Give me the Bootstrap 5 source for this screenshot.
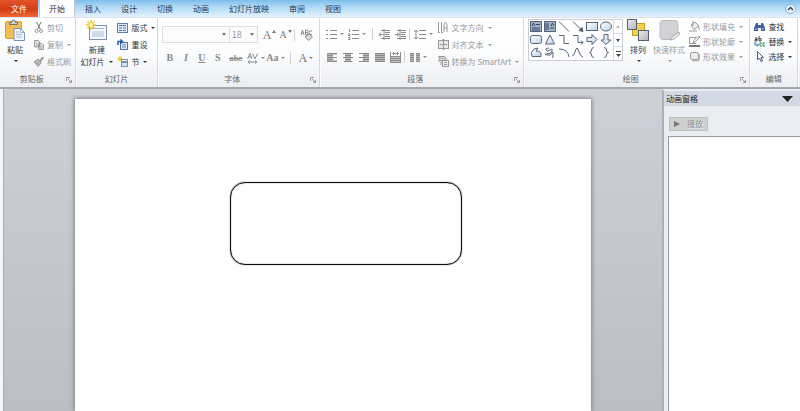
<!DOCTYPE html>
<html lang="zh-CN">
<head>
<meta charset="utf-8">
<meta name="viewport" content="width=device-width, initial-scale=1">
<title>演示文稿</title>
<link href="https://cdn.jsdelivr.net/npm/bootstrap@5.3.0/dist/css/bootstrap.min.css" rel="stylesheet">
<style>
body{font-family:"Noto Sans CJK SC","Liberation Sans",sans-serif;font-size:8px;line-height:12px;color:#333;background:#cdd1d7}
button,select{font:inherit;color:inherit;background:none;border:0;padding:0;line-height:12px}
svg{display:block;flex:none;fill:none;stroke:currentColor}
.tabbar{height:17px;background:linear-gradient(#7dbdec,#a9d6f5 35%,#e4f2fc)}
.tabbar .rtab{padding:0 10px;color:#26384d;height:17px;line-height:12px}
.tabbar .file-tab{background:linear-gradient(#e4552c,#d33d16 55%,#ee6a34);color:#fff;padding:0 11px;margin-right:1px}
.tabbar .rtab.active{background:#fff;color:#333;border:1px solid #b9c6d6;border-width:0 1px;padding:0 9px}
.ribbon{height:70px;background:linear-gradient(#fff,#fbfcfd 50%,#eceef3);border-top:1px solid #dde3ea}
.rgroup{border-right:1px solid #d3d7de;box-shadow:1px 0 #fff;min-width:0;display:flex;flex-direction:column}
.gbody{height:54px;padding-top:1px}
.gcap{color:#666;text-align:center;position:relative;line-height:14px}
.gcap.with-launch{padding-right:12px}
.gcap svg{position:absolute;right:3px;top:5px;color:#999}
.g-clip{flex:76 1 0}.g-slide{flex:81 1 0}.g-font{flex:162 1 0}.g-para{flex:205 1 0}.g-draw{flex:227 1 0}.g-edit{flex:47 1 0}
.ribbon-end{flex:2 1 0}
.off{color:#9a9a9a}
.cmd{display:flex;align-items:center;gap:3px;white-space:nowrap;height:17px}
.tight .cmd{height:15px}
.car::after{content:"";border:2px solid transparent;border-top-color:currentColor;border-bottom:0;margin-left:1px;flex:none}
.big{display:flex;flex-direction:column;align-items:center;white-space:nowrap}
.big svg{margin-bottom:3px}
.big .under{display:flex;padding-top:4px}
.trow{display:flex;align-items:center;margin-top:7px}
.tool{width:16px;height:16px;display:inline-flex;align-items:center;justify-content:center;gap:2px;font-family:"Liberation Serif",serif;font-size:10px;font-weight:bold;color:#8b8b8b;flex:none}
.tool.w20{width:20px}.tool.w22{width:22px}
.tool.grow{font-size:12px;font-weight:normal;-webkit-text-stroke:0;color:#777;gap:1px}
.tool.shrink{font-size:10px;font-weight:normal;color:#777;gap:1px}
.tool svg.tip{align-self:flex-start;margin-top:3px}
.rsep{width:1px;height:12px;background:#d0d0d0;flex:none}
.pick{appearance:none;border:1px solid #dedede;height:17px;padding:0 4px;color:#999;font-size:9px;background:#fbfbfb url("data:image/svg+xml,%3Csvg xmlns='http://www.w3.org/2000/svg' width='4' height='3'%3E%3Cpath d='M0 0h4l-2 3z' fill='%23777'/%3E%3C/svg%3E") no-repeat right 3px center}
.pick-name{width:71px}.pick-size{width:30px;margin-left:-1px;padding:0 2px}
.gallery{border:1px solid #c9ced6;background:#fff;height:42px;color:#566476}
.shapes{display:grid;grid-template-columns:repeat(6,14px);grid-auto-rows:13px;align-items:center;justify-items:center}
.scroller{width:9px;border-left:1px solid #d5d8de}
.scroller button{flex:1;display:flex;align-items:center;justify-content:center;border-bottom:1px solid #d5d8de}
.scroller button:last-child{border:0}
.work{border-top:2px solid #a5a7af;min-height:0}
.thumbs{width:4px;background:#f4f6f9;border-right:1px solid #a9adb6}
.stage{background:linear-gradient(#cdd1d7,#bbbec4);padding:10px 71px 0;overflow:hidden}
.slide{background:#fff;height:100%;padding-top:83px;box-shadow:0 0 4px 1px #7f8387}
.roundbox{width:45%;height:83px;margin-left:30%;border:1px solid #111;border-radius:15px;box-shadow:0 0 1px #000,inset 0 0 1px #000}
.pane{width:138px;background:#e9edf2;border-left:2px solid #a9afbb;border-top:2px solid #e9edf2}
.pane-head{height:15px;background:#d3d9e3;padding:0 7px 0 2px;color:#222}
.play{background:#cfcfcf;border:1px solid #bdbfc1;height:14px;width:39px;color:#929292;margin:11px 0 5px 5px;text-shadow:1px 1px #eee}
.anim-list{background:#fff;border:1px solid #969ba5;border-right:0;border-bottom:0;margin-left:4px}
</style>
<script src="https://cdn.jsdelivr.net/npm/bootstrap@5.3.0/dist/js/bootstrap.bundle.min.js"></script>
</head>
<body class="vh-100 d-flex flex-column overflow-hidden">
<svg width="0" height="0" class="position-absolute" aria-hidden="true">
<defs>
<symbol id="launch" viewBox="0 0 6 6"><path d="M.5 4V.5H4M2 2l3 3M5.500 3v2.500H3"/></symbol>
<linearGradient id="soft" x2="1" y2="1"><stop stop-color="#fff"/><stop offset="1" stop-color="#bcd5ec"/></linearGradient>
<linearGradient id="grey" x2="1" y2="1"><stop stop-color="#eee"/><stop offset="1" stop-color="#b0b0b8"/></linearGradient>
</defs>
</svg>

<nav class="tabbar d-flex" aria-label="功能区选项卡">
<button class="rtab file-tab">文件</button><button class="rtab active">开始</button><button class="rtab">插入</button><button class="rtab">设计</button><button class="rtab">切换</button><button class="rtab">动画</button><button class="rtab">幻灯片放映</button><button class="rtab">审阅</button><button class="rtab">视图</button>
<button class="ms-auto me-1" aria-label="折叠功能区"><svg width="11" height="10" viewBox="0 0 11 10"><ellipse cx="5.500" cy="5" rx="5" ry="4.500" fill="#e4f0fa" stroke="#8db4d8"/><path d="M3 6L5.500 3.500 8 6" stroke="#345" stroke-width="1.300"/></svg></button>
</nav>

<main class="ribbon d-flex">
<section class="rgroup g-clip">
<div class="gbody d-flex">
<button class="big px-1">
<svg width="22" height="22" viewBox="0 0 22 22"><rect x="1.500" y="2.500" width="16" height="17" rx="1" fill="#f3bd55" stroke="#d99a35"/><path d="M5.500 5.500V3.500H7.500Q7.500 1 9.500 1T11.500 3.500H13.500V5.500Z" fill="#ccc" stroke="#777"/><path d="M10 9.500H16.500L20.500 13.500V21.500H10Z" fill="#eef5fd" stroke="#7c93ae"/><path d="M16.500 9.500V13.500H20.500M12 13h3M12 15.500h6M12 18h6" stroke="#9eb5cc"/></svg>
<span>粘贴</span><span class="car under"></span></button>
<div class="off ms-1">
<button class="cmd"><svg width="10" height="11" viewBox="0 0 10 11"><path d="M2.500 0L6.500 7.500M7 0L3.500 7.500" stroke="#777"/><circle cx="2.500" cy="9" r="1.500"/><circle cx="7" cy="9" r="1.500"/></svg>剪切</button>
<button class="cmd car"><svg width="10" height="10" viewBox="0 0 10 10"><path d="M.5.5h4l1 1V7h-5zM4.500 3.500H8L9.500 5v4.500h-5z" fill="#e4e4e4"/><path d="M6 6h2M6 8h2M2 3h1M2 5h2"/></svg>复制</button>
<button class="cmd"><svg width="10" height="10" viewBox="0 0 10 10"><path d="M9.500 0L6 4" stroke-width="2"/><path d="M0 5L4 2 7.500 5.500 4 9.500Z" fill="#bbb"/><path d="M2 5l3 2.500"/></svg>格式刷</button>
</div></div>
<div class="gcap with-launch">剪贴板<svg width="6" height="6"><use href="#launch"/></svg></div>
</section>

<section class="rgroup g-slide">
<div class="gbody d-flex">
<button class="big px-1">
<svg width="22" height="22" viewBox="0 0 22 22"><rect x="3.500" y="6.500" width="17" height="14" fill="#f5f9fe" stroke="#7d92b0"/><path d="M6 9.500h12" stroke="#9eb4d0"/><rect x="6" y="12" width="12" height="6" fill="#cbdcf0" stroke="none"/><path d="M5 1V11M0 6H10M1.500 2.500L8.500 9.500M8.500 2.500L1.500 9.500" stroke="#f0c32a" stroke-width="1.500"/><circle cx="5" cy="6" r="2" fill="#fff6b0" stroke="none"/></svg>
<span>新建</span><span class="d-flex align-items-center gap-1 car">幻灯片</span></button>
<div>
<button class="cmd car"><svg width="11" height="10" viewBox="0 0 11 10"><rect x=".5" y=".5" width="10" height="9" fill="#dceafa" stroke="#5f80ac"/><path d="M2 2.500h7M2 5h3M6 5h3M2 7.500h3M6 7.500h3" stroke="#5279ae"/></svg>版式</button>
<button class="cmd"><svg width="11" height="11" viewBox="0 0 11 11"><rect x="3.500" y="3.500" width="7" height="7" fill="#dceafa" stroke="#4f73a5"/><path d="M5 6h4M5 8h4" stroke="#6888b5"/><path d="M1 6V2.500H5M3.500 0.500L5.500 2.500 3.500 4.500" stroke="#2458a6" stroke-width="1.500"/></svg>重设</button>
<button class="cmd car"><svg width="11" height="11" viewBox="0 0 11 11"><path d="M3 0v6M0 3h6M1 1l4 4M5 1L1 5" stroke="#edc02d"/><rect x="4.500" y="3.500" width="6" height="2" fill="#fff" stroke="#7890b0"/><rect x="4.500" y="6.500" width="6" height="4" fill="#d8e6f6" stroke="#7890b0"/></svg>节</button>
</div></div>
<div class="gcap">幻灯片</div>
</section>

<section class="rgroup g-font">
<div class="gbody px-1">
<div class="trow">
<select class="pick pick-name" aria-label="字体"><option></option></select>
<select class="pick pick-size" aria-label="字号"><option>18</option></select>
<button class="tool grow ms-1" aria-label="增大字号">A<svg class="tip" width="4" height="3" viewBox="0 0 4 3"><path d="M0 3h4L2 0z" fill="#777" stroke="none"/></svg></button>
<button class="tool shrink" aria-label="减小字号">A<svg class="tip" width="4" height="3" viewBox="0 0 4 3"><path d="M0 0h4L2 3z" fill="#777" stroke="none"/></svg></button>
<span class="rsep"></span>
<button class="tool ms-1" aria-label="清除格式"><svg width="13" height="12" viewBox="0 0 13 12"><path d="M1 6L2.500 1 4 6M1.500 4h2M5.500 1v5h2q1-1 0-2.500h-2 2q1-1 0-2.500zM12 2q-3-1-3 1.500T12 5.500"/><path d="M5 8L9 5 12.500 8 8.500 11.500Z" fill="#ddd"/></svg></button>
</div>
<div class="trow">
<button class="tool">B</button><button class="tool fst-italic">I</button><button class="tool text-decoration-underline">U</button><button class="tool">S</button>
<button class="tool w20 text-decoration-line-through"><small>abe</small></button>
<button class="tool w20 car" aria-label="字符间距"><svg width="11" height="11" viewBox="0 0 11 11"><path d="M.5 6L3 .5 5 6M1.500 4h3M5.500.5L8 6 10.500.5M1 9h9M3 7.500L1 9l2 1.500M8 7.500L10 9 8 10.500"/></svg></button>
<button class="tool w20 car">Aa</button><span class="rsep ms-1"></span><button class="tool grow w22 car ms-1">A</button>
</div></div>
<div class="gcap with-launch">字体<svg width="6" height="6"><use href="#launch"/></svg></div>
</section>

<section class="rgroup g-para">
<div class="gbody d-flex px-1">
<div class="flex-shrink-0">
<div class="trow">
<button class="tool w22 car" aria-label="项目符号"><svg width="11" height="11" viewBox="0 0 11 11"><path d="M0 1.500h2M0 5.500h2M0 9.500h2M4 1.500h7M4 5.500h7M4 9.500h7"/></svg></button>
<button class="tool w22 car" aria-label="编号"><svg width="11" height="11" viewBox="0 0 11 11"><path d="M1.500 0v3M0 5h2v1.500H0M0 8.500h2v2H0M4 1.500h7M4 5.500h7M4 9.500h7"/></svg></button>
<span class="rsep mx-1"></span>
<button class="tool" aria-label="减少缩进"><svg width="11" height="11" viewBox="0 0 11 11"><path d="M2 1.500h9M6 3.500h5M6 5.500h4M6 7.500h5M2 9.500h9M0 5.500h4M2 3.500l-2 2 2 2M5 0v11"/></svg></button>
<button class="tool" aria-label="增加缩进"><svg width="11" height="11" viewBox="0 0 11 11"><path d="M2 1.500h9M6 3.500h5M6 5.500h4M6 7.500h5M2 9.500h9M0 5.500h4M2 3.500l2 2-2 2M5 0v11"/></svg></button>
<span class="rsep me-1"></span>
<button class="tool w20 car" aria-label="行距"><svg width="12" height="11" viewBox="0 0 12 11"><path d="M2 1v9M0 3l2-2 2 2M0 8l2 2 2-2M5 1.500h7M5 5.500h7M5 9.500h7"/></svg></button>
</div>
<div class="trow">
<button class="tool" aria-label="左对齐"><svg width="10" height="9" viewBox="0 0 10 9"><path d="M0 1h10M0 4.500h10M0 8h10" stroke-width="1"/><path d="M0 .5h6v8H0z" fill="#b5b5b5" stroke="none"/><path d="M0 .5h10M0 2.500h6M0 4.500h10M0 6.500h6M0 8.500h10"/></svg></button>
<button class="tool" aria-label="居中"><svg width="10" height="9" viewBox="0 0 10 9"><path d="M2 .5h6v8H2z" fill="#b5b5b5" stroke="none"/><path d="M0 .5h10M2 2.500h6M0 4.500h10M2 6.500h6M1 8.500h8"/></svg></button>
<button class="tool" aria-label="右对齐"><svg width="10" height="9" viewBox="0 0 10 9"><path d="M4 .5h6v8H4z" fill="#b5b5b5" stroke="none"/><path d="M0 .5h10M4 2.500h6M0 4.500h10M4 6.500h6M0 8.500h10"/></svg></button>
<button class="tool" aria-label="两端对齐"><svg width="10" height="9" viewBox="0 0 10 9"><path d="M0 .5h10v8H0z" fill="#b5b5b5" stroke="none"/><path d="M0 .5h10M0 2.500h10M0 4.500h10M0 6.500h10M0 8.500h10"/></svg></button>
<button class="tool" aria-label="分散对齐"><svg width="11" height="11" viewBox="0 0 11 11"><path d="M1 4h9v6H1z" fill="#c5c5c5" stroke="none"/><path d="M.5 0v11M10.500 0v11M3 1.500h5M1 4.500h9M1 6.500h9M1 8.500h9M1 10.500h9M4 0L2.500 1.500 4 3M7 0l1.500 1.500L7 3"/></svg></button>
<span class="rsep me-1"></span>
<button class="tool w20 car" aria-label="分栏"><svg width="10" height="9" viewBox="0 0 10 9"><path d="M0 0h4v9H0zM6 0h4v9H6z" fill="#b5b5b5" stroke="none"/><path d="M0 .5h4M0 2.500h4M0 4.500h4M0 6.500h4M0 8.500h4M6 .5h4M6 2.500h4M6 4.500h4M6 6.500h4M6 8.500h4"/></svg></button>
</div></div>
<div class="off ms-1">
<button class="cmd car"><svg width="11" height="11" viewBox="0 0 11 11"><path d="M.5 0v10M3.500 0v10M6 10V3l1.500-3L9 3v7M6 6h3M0 10.500h2M3 10.500h2"/></svg>文字方向</button>
<button class="cmd car"><svg width="11" height="11" viewBox="0 0 11 11"><rect x=".5" y="1.500" width="10" height="8" fill="#e8e8e8"/><path d="M5.500 0v11M4 2l1.500-2L7 2M4 9l1.500 2L7 9M2 5.500h7"/></svg>对齐文本</button>
<button class="cmd car"><svg width="11" height="11" viewBox="0 0 11 11"><path d="M.5.500h6l2 2.500-2 2h-6L2 3z" fill="#ccc"/><rect x="4.500" y="4.500" width="6" height="6" fill="#eee"/><path d="M6 6.500h3M6 8.500h3M3 6v3"/></svg>转换为 SmartArt</button>
</div></div>
<div class="gcap with-launch">段落<svg width="6" height="6"><use href="#launch"/></svg></div>
</section>

<section class="rgroup g-draw">
<div class="gbody d-flex px-1 align-items-start">
<div class="gallery d-flex">
<div class="shapes">
<svg width="12" height="11" viewBox="0 0 12 11"><rect x=".5" y=".5" width="11" height="10" fill="#9fb3ca"/><path d="M2 5l1.500-3L5 5M6 3.500h4M2 7h8M2 9h8" stroke="#31465e"/></svg>
<svg width="12" height="11" viewBox="0 0 12 11"><rect x=".5" y=".5" width="11" height="10" fill="#9fb3ca"/><path d="M7 5l1.500-3L10 5M2 2v7M4 2v7M6 7h4" stroke="#31465e"/></svg>
<svg width="12" height="11" viewBox="0 0 12 11"><path d="M1 .5l10 10"/></svg>
<svg width="12" height="11" viewBox="0 0 12 11"><path d="M1 .5l9 9"/><path d="M11 10.500l-4-1 3-3z" fill="currentColor"/></svg>
<svg width="12" height="11" viewBox="0 0 12 11"><rect x=".5" y="1.500" width="11" height="8" fill="url(#soft)"/></svg>
<svg width="12" height="11" viewBox="0 0 12 11"><ellipse cx="6" cy="5.500" rx="5.500" ry="4.500" fill="url(#soft)"/></svg>
<svg width="12" height="11" viewBox="0 0 12 11"><rect x=".5" y="1.500" width="11" height="8" rx="2" fill="url(#soft)"/></svg>
<svg width="12" height="11" viewBox="0 0 12 11"><path d="M6 1l4.500 9h-9z" fill="url(#soft)"/></svg>
<svg width="12" height="11" viewBox="0 0 12 11"><path d="M1 1.500h5v8h5"/></svg>
<svg width="12" height="11" viewBox="0 0 12 11"><path d="M1 1.500h5v7h5M9 6.500l2 2-2 2"/></svg>
<svg width="12" height="11" viewBox="0 0 12 11"><path d="M1 3.500h5v-3l5 5-5 5v-3H1z" fill="url(#soft)"/></svg>
<svg width="12" height="11" viewBox="0 0 12 11"><path d="M4 .5h4V6h3l-5 4.500L1 6h3z" fill="url(#soft)"/></svg>
<svg width="12" height="11" viewBox="0 0 12 11"><path d="M2 9.500Q0 5 4 2l4-1-2 3q5 0 5 3v2.500z" fill="url(#soft)"/></svg>
<svg width="12" height="11" viewBox="0 0 12 11"><path d="M5 1Q1 1 2 3t4 0 2 1-5 3 0 1 5-2 1 2-3 3"/></svg>
<svg width="12" height="11" viewBox="0 0 12 11"><path d="M1 2q9 0 10 8"/></svg>
<svg width="12" height="11" viewBox="0 0 12 11"><path d="M0 9Q2 9 3 5T5 1 7 5t4 5"/></svg>
<svg width="12" height="11" viewBox="0 0 12 11"><path d="M8 .5Q5.500.5 5.500 3T3.500 5.500Q5.500 5.500 5.500 8T8 10.500"/></svg>
<svg width="12" height="11" viewBox="0 0 12 11"><path d="M4 .5Q6.500.5 6.500 3T8.500 5.500Q6.500 5.500 6.500 8T4 10.500"/></svg>
</div>
<div class="scroller d-flex flex-column">
<button aria-label="上一行"><svg width="4" height="3" viewBox="0 0 4 3"><path d="M0 3h4L2 0z" fill="#bbb" stroke="none"/></svg></button>
<button aria-label="下一行"><svg width="4" height="3" viewBox="0 0 4 3"><path d="M0 0h4L2 3z" fill="#444" stroke="none"/></svg></button>
<button aria-label="其他"><svg width="5" height="6" viewBox="0 0 5 6"><path d="M0 .5h5" stroke="#444"/><path d="M0 3h5L2.500 6z" fill="#444" stroke="none"/></svg></button>
</div></div>
<button class="big px-1">
<svg width="22" height="22" viewBox="0 0 22 22"><rect x="5.500" y="4.500" width="12" height="12" fill="#f4d34c" stroke="#c59b24"/><rect x=".5" y=".5" width="9" height="10" fill="url(#grey)" stroke="#555f70"/><rect x="11.500" y="11.500" width="10" height="10" fill="url(#grey)" stroke="#555f70"/></svg>
<span>排列</span><span class="car under"></span></button>
<button class="big off">
<svg width="22" height="22" viewBox="0 0 22 22"><path d="M5 1.500h12q3 0 3 3v9q-6 1-7 7H5q-3 0-3-3v-13q0-3 3-3z" fill="#d2d2d6" stroke="#bbb"/><path d="M21 13l-7 5-2 3 4-1 6-5z" fill="#eee" stroke="#aaa"/></svg>
<span>快速样式</span><span class="car under"></span></button>
<div class="off ms-1 tight">
<button class="cmd car"><svg width="11" height="11" viewBox="0 0 11 11"><path d="M2 4l4-3 4 4-5 3.500z" fill="#eee"/><path d="M4 0v5M9 5q2 2 1 4"/><path d="M0 10h8" stroke="#ccc" stroke-width="2"/></svg>形状填充</button>
<button class="cmd car"><svg width="11" height="11" viewBox="0 0 11 11"><path d="M7 1.500H.5v6H7M4 7l1-3 5-4 1 1-5 5z"/><path d="M0 10h11" stroke="#777" stroke-width="2"/></svg>形状轮廓</button>
<button class="cmd car"><svg width="11" height="11" viewBox="0 0 11 11"><path d="M3 9.500h6l1.500-2V3" stroke="#bbb" stroke-width="2"/><rect x="1.500" y="1.500" width="8" height="7" rx="2" fill="#eee"/></svg>形状效果</button>
</div></div>
<div class="gcap with-launch">绘图<svg width="6" height="6"><use href="#launch"/></svg></div>
</section>

<section class="rgroup g-edit">
<div class="gbody tight ps-1">
<button class="cmd"><svg width="11" height="10" viewBox="0 0 11 10"><path d="M2 1h2v2h3V1h2l2 5v3H7V6H4v3H0V6z" fill="#3d5f9a" stroke="none"/><path d="M1 7h2M8 7h2" stroke="#bcd0ee"/></svg>查找</button>
<button class="cmd car"><svg width="11" height="11" viewBox="0 0 11 11"><path d="M1 2h2v3H1V3.500h2M5 0v5h2V2.500H5" stroke="#444"/><path d="M1 6v3h3M3 7.500L4.500 9 3 10.500" stroke="#3670bd"/><path d="M8 7H6v3h2M11 7H9v3h2" stroke="#349063"/></svg>替换</button>
<button class="cmd car"><svg width="11" height="11" viewBox="0 0 11 11"><path d="M3.500.5v8.500l2-2 1.500 3.500 1.500-.5L7 6.500h2.500z" fill="#fff" stroke="#456083"/></svg>选择</button>
</div>
<div class="gcap">编辑</div>
</section>
<div class="ribbon-end"></div>
</main>

<div class="work d-flex flex-fill">
<aside class="thumbs"></aside>
<section class="stage flex-fill" aria-label="幻灯片编辑区"><div class="slide"><div class="roundbox"></div></div></section>
<aside class="pane d-flex flex-column">
<header class="pane-head d-flex align-items-center justify-content-between"><span>动画窗格</span><button aria-label="窗格选项"><svg width="11" height="6" viewBox="0 0 11 6"><path d="M0 0h11L5.500 6z" fill="#222" stroke="none"/></svg></button></header>
<button class="play d-flex align-items-center justify-content-between px-1" disabled><svg width="6" height="6" viewBox="0 0 6 6"><path d="M0 0l6 3-6 3z" fill="#777" stroke="none"/></svg><span>播放</span></button>
<div class="anim-list flex-fill"></div>
</aside>
</div>
</body>
</html>
